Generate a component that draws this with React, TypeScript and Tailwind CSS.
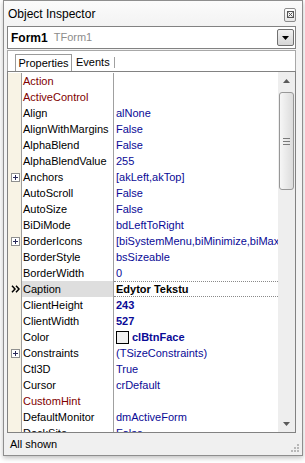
import React from 'react';

type Row = {
	name: string;
	value?: string;
	red?: boolean;
	bold?: boolean;
	plus?: boolean;
	selected?: boolean;
	swatch?: boolean;
};

const rows: Row[] = [
	{ name: 'Action', red: true },
	{ name: 'ActiveControl', red: true },
	{ name: 'Align', value: 'alNone' },
	{ name: 'AlignWithMargins', value: 'False' },
	{ name: 'AlphaBlend', value: 'False' },
	{ name: 'AlphaBlendValue', value: '255' },
	{ name: 'Anchors', value: '[akLeft,akTop]', plus: true },
	{ name: 'AutoScroll', value: 'False' },
	{ name: 'AutoSize', value: 'False' },
	{ name: 'BiDiMode', value: 'bdLeftToRight' },
	{ name: 'BorderIcons', value: '[biSystemMenu,biMinimize,biMaximize]', plus: true },
	{ name: 'BorderStyle', value: 'bsSizeable' },
	{ name: 'BorderWidth', value: '0' },
	{ name: 'Caption', value: 'Edytor Tekstu', selected: true },
	{ name: 'ClientHeight', value: '243', bold: true },
	{ name: 'ClientWidth', value: '527', bold: true },
	{ name: 'Color', value: 'clBtnFace', bold: true, swatch: true },
	{ name: 'Constraints', value: '(TSizeConstraints)', plus: true },
	{ name: 'Ctl3D', value: 'True' },
	{ name: 'Cursor', value: 'crDefault' },
	{ name: 'CustomHint', red: true },
	{ name: 'DefaultMonitor', value: 'dmActiveForm' },
	{ name: 'DockSite', value: 'False' },
];

function PlusBox() {
	return (
		<svg width="9" height="9" viewBox="0 0 9 9">
			<rect x="0.5" y="0.5" width="8" height="8" fill="#fff" stroke="#8f8f8f" />
			<path d="M2 4.5h5M4.5 2v5" stroke="#2a2a5a" strokeWidth="1" />
		</svg>
	);
}

function Chevrons() {
	return (
		<svg width="9" height="8" viewBox="0 0 9 8">
			<path d="M1 0.8L4 4L1 7.2M5 0.8L8 4L5 7.2" fill="none" stroke="#000" strokeWidth="1.5" />
		</svg>
	);
}

function PropRow({ row }: { row: Row }) {
	const nameColor = row.red ? 'text-[#800000]' : 'text-black';
	return (
		<div className="flex h-[16px] leading-[16px] text-[11px]">
			<div className="w-[14px] shrink-0 bg-[#f8f3e5] border-r border-[#9c9c9c] flex items-center justify-center pl-[1px]">
				{row.plus && <PlusBox />}
				{row.selected && <Chevrons />}
			</div>
			<div
				className={`w-[92px] shrink-0 border-r border-[#a0a0a0] pl-[1px] whitespace-nowrap overflow-hidden ${nameColor} ${row.selected ? 'bg-[#dedede]' : ''}`}
			>
				{row.name}
			</div>
			<div
				className={`flex-1 min-w-0 pl-[2px] whitespace-nowrap overflow-hidden flex items-center ${row.selected ? 'border-y border-dotted border-[#8a8a8a] font-bold text-black' : 'text-[#0a0a96]'} ${row.bold ? 'font-bold' : ''}`}
			>
				{row.swatch && (
					<span className="w-[13px] h-[13px] border border-black bg-[#f0f0f0] mr-[3px] shrink-0" />
				)}
				{row.value}
			</div>
		</div>
	);
}

function Scrollbar() {
	return (
		<div className="w-[17px] shrink-0 bg-[#eeeeee] flex flex-col">
			<div className="h-[17px] flex items-center justify-center">
				<svg width="7" height="4" viewBox="0 0 7 4">
					<path d="M3.5 0L7 4H0z" fill="#5a5a5a" />
				</svg>
			</div>
			<div className="mt-[3px] ml-[1px] w-[15px] h-[98px] rounded-[3px] border border-[#979797] bg-gradient-to-r from-[#f6f6f6] to-[#dcdcdc] flex flex-col items-center justify-center gap-[2px]">
				<div className="w-[7px] h-[1px] bg-[#7a7a7a]" />
				<div className="w-[7px] h-[1px] bg-[#7a7a7a]" />
				<div className="w-[7px] h-[1px] bg-[#7a7a7a]" />
			</div>
			<div className="flex-1" />
			<div className="h-[17px] flex items-center justify-center">
				<svg width="7" height="4" viewBox="0 0 7 4">
					<path d="M0 0H7L3.5 4z" fill="#5a5a5a" />
				</svg>
			</div>
		</div>
	);
}

export default function App() {
	return (
		<div className="w-[305px] h-[463px] bg-white font-['Liberation_Sans',Arial,sans-serif] overflow-hidden">
			<div className="ml-[3px] w-[300px] h-[456px] border border-[#8e8e8e] bg-[#f3f3f3] flex flex-col shadow-[0_2px_5px_rgba(0,0,0,0.25)]">
				{/* title */}
				<div className="h-[25px] shrink-0 flex items-center justify-between pl-[4px] pr-[6px] bg-gradient-to-b from-[#fbfbfb] to-[#f3f3f3]">
					<span className="text-[12px] text-black">Object Inspector</span>
					<div className="w-[12px] h-[14px] mt-[2px] border border-[#8c8c8c] rounded-[2px] bg-gradient-to-b from-white to-[#e6e6e6] flex items-center justify-center">
						<svg width="7" height="7" viewBox="0 0 7 7">
							<rect x="0.5" y="0.5" width="6" height="6" fill="none" stroke="#555" />
							<path d="M1.5 1.5L5.5 5.5M5.5 1.5L1.5 5.5" stroke="#555" strokeWidth="1" />
						</svg>
					</div>
				</div>

				{/* object combo */}
				<div className="ml-[3px] mr-[6px] h-[23px] shrink-0 border border-[#828282] bg-white flex items-center pl-[3px] pr-[1px]">
					<span className="text-[12px] font-bold text-black">Form1</span>
					<span className="text-[11px] text-[#8c8c8c] ml-[6px]">TForm1</span>
					<div className="ml-auto w-[17px] h-[17px] border border-[#707070] rounded-[2px] bg-gradient-to-b from-[#f2f2f2] to-[#d6d6d6] flex items-center justify-center">
						<svg width="7" height="4" viewBox="0 0 7 4">
							<path d="M0 0H7L3.5 4z" fill="#000" />
						</svg>
					</div>
				</div>

				{/* tabs */}
				<div className="ml-[3px] mr-[6px] mt-[1px] h-[21px] shrink-0 border-t border-x border-[#a8a8a8] bg-white flex items-end pl-[7px] text-[11px]">
					<div className="h-[17px] w-[57px] border-t border-x border-[#9a9a9a] bg-white flex items-center justify-center text-black">
						Properties
					</div>
					<div className="h-[17px] flex items-center pl-[4px] text-black">
						<span className="pr-[4px] border-r border-[#a0a0a0] leading-[11px]">Events</span>
					</div>
				</div>

				{/* grid */}
				<div className="ml-[3px] mr-[6px] h-[362px] shrink-0 border border-[#828282] bg-white flex">
					<div className="flex-1 min-w-0 overflow-hidden pt-[1px]">
						{rows.map((r) => (
							<PropRow key={r.name} row={r} />
						))}
					</div>
					<Scrollbar />
				</div>

				{/* status */}
				<div className="flex-1 flex items-center pl-[6px] pr-[2px] bg-[#f0f0f0] text-[11px] text-black">
					<span>All shown</span>
					<svg className="ml-auto mt-[8px]" width="10" height="10" viewBox="0 0 10 10">
						<rect x="7" y="1" width="2" height="2" fill="#b8b8b8" />
						<rect x="4" y="4" width="2" height="2" fill="#b8b8b8" />
						<rect x="7" y="4" width="2" height="2" fill="#b8b8b8" />
						<rect x="1" y="7" width="2" height="2" fill="#b8b8b8" />
						<rect x="4" y="7" width="2" height="2" fill="#b8b8b8" />
						<rect x="7" y="7" width="2" height="2" fill="#b8b8b8" />
					</svg>
				</div>
			</div>
		</div>
	);
}
